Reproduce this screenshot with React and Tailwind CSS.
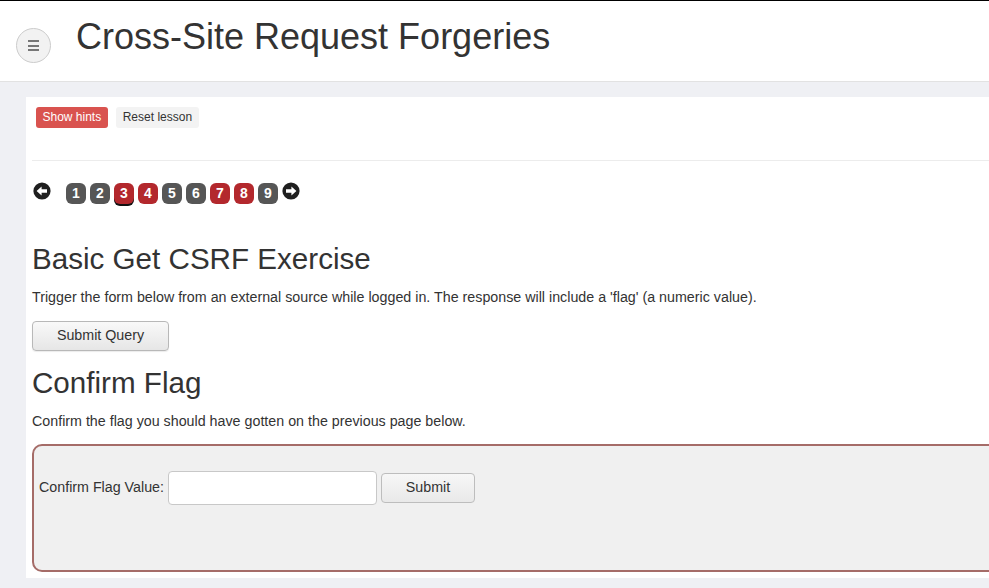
import React from "react";

function CircleArrow({ dir }) {
  return (
    <svg width="18" height="18" viewBox="0 0 18 18" className="block">
      <circle cx="9" cy="9" r="8.6" fill="#1f1f1f" />
      {dir === "left" ? (
        <path d="M3.6 9 L8.6 4.4 V7.3 H14 V10.7 H8.6 V13.6 Z" fill="#fff" />
      ) : (
        <path d="M14.4 9 L9.4 4.4 V7.3 H4 V10.7 H9.4 V13.6 Z" fill="#fff" />
      )}
    </svg>
  );
}

const pages = [
  { n: 1, red: false },
  { n: 2, red: false },
  { n: 3, red: true, active: true },
  { n: 4, red: true },
  { n: 5, red: false },
  { n: 6, red: false },
  { n: 7, red: true },
  { n: 8, red: true },
  { n: 9, red: false },
];

export default function App() {
  return (
    <div className="w-[989px] h-[588px] overflow-hidden bg-[#eff0f4] font-['Liberation_Sans',Arial,sans-serif] text-[#333]">
      <div className="h-px bg-black" />
      <header className="h-[81px] bg-white border-b border-[#e2e2e2] flex items-start pl-[16px]">
        <button className="mt-[27px] w-[35px] h-[35px] rounded-full bg-[#f2f2f2] border border-[#cccccc] flex flex-col items-center justify-center gap-[2.5px]">
          <span className="block w-[11px] h-[2px] bg-[#777]" />
          <span className="block w-[11px] h-[2px] bg-[#777]" />
          <span className="block w-[11px] h-[2px] bg-[#777]" />
        </button>
        <h1 className="ml-[25px] mt-[16px] text-[36px] leading-[40px] font-normal text-[#333]">
          Cross-Site Request Forgeries
        </h1>
      </header>

      <div className="mt-[15px] ml-[26px] w-[1000px] h-[481px] bg-white">
        <div className="ml-[6px] h-[64px] border-b border-[#ececec] pt-[10px] pl-[4px] flex items-start gap-[8px]">
          <button className="h-[21px] px-[6.5px] rounded-[3px] bg-[#d9534f] text-white text-[12px] leading-[21px]">
            Show hints
          </button>
          <button className="h-[21px] px-[7px] rounded-[3px] bg-[#f3f3f3] text-[#333] text-[12px] leading-[21px]">
            Reset lesson
          </button>
        </div>

        <div className="mt-[21px] ml-[7px] flex items-start h-[23px]">
          <CircleArrow dir="left" />
          <div className="ml-[15px] mt-px flex gap-[4px]">
            {pages.map((p) => (
              <div
                key={p.n}
                className={
                  "w-[20px] h-[21px] rounded-[6px] flex items-center justify-center text-white text-[14px] font-bold " +
                  (p.red ? "bg-[#b3282d]" : "bg-[#565656]") +
                  (p.active ? " shadow-[0_2px_0_#111]" : "")
                }
              >
                {p.n}
              </div>
            ))}
          </div>
          <div className="ml-[4px]">
            <CircleArrow dir="right" />
          </div>
        </div>

        <div className="pl-[6px]">
          <h2 className="mt-[37px] text-[29.6px] leading-[33px] font-normal">Basic Get CSRF Exercise</h2>
          <p className="mt-[12px] text-[14.27px] leading-[20px]">
            Trigger the form below from an external source while logged in. The response will include a 'flag' (a numeric value).
          </p>
          <button className="mt-[14px] w-[137px] h-[30px] rounded-[4px] border border-[#b8b8b8] bg-gradient-to-b from-[#f9f9f9] to-[#e6e6e6] text-[14.27px] text-[#333] shadow-[0_1px_1px_rgba(0,0,0,0.08)]">
            Submit Query
          </button>
          <h2 className="mt-[15px] text-[29.6px] leading-[33px] font-normal">Confirm Flag</h2>
          <p className="mt-[12px] text-[14.27px] leading-[20px]">
            Confirm the flag you should have gotten on the previous page below.
          </p>
          <div className="mt-[13px] w-[1000px] h-[128px] rounded-[10px] border-2 border-[#a56c68] bg-[#f0f0f0] pt-[25px] pl-[5px]">
            <div className="flex items-center">
              <span className="text-[14.27px] text-[#333]">Confirm Flag Value:</span>
              <input
                type="text"
                className="ml-[4px] w-[209px] h-[34px] bg-white border border-[#c8c8c8] rounded-[4px] outline-none px-2"
              />
              <button className="ml-[4px] w-[94px] h-[30px] rounded-[4px] border border-[#bdbdbd] bg-gradient-to-b from-[#f7f7f7] to-[#e9e9e9] text-[14.27px] text-[#333]">
                Submit
              </button>
            </div>
          </div>
        </div>
      </div>
    </div>
  );
}
